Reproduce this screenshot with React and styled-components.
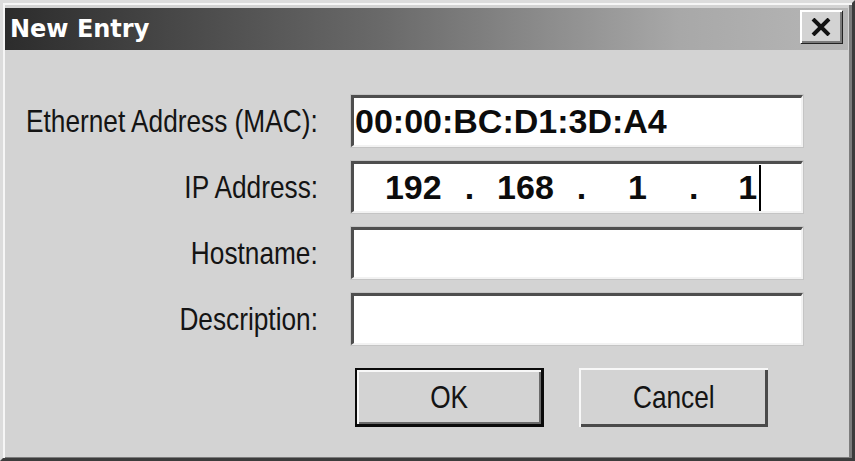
import React from "react";
import styled, { createGlobalStyle } from "styled-components";

const Global = createGlobalStyle`
  html, body { margin: 0; padding: 0; background: #d3d3d3; }
  body { width: 855px; height: 461px; overflow: hidden; }
`;

const Window = styled.div`
  box-sizing: border-box;
  width: 855px;
  height: 461px;
  display: flex;
  flex-direction: column;
  background: #d3d3d3;
  border-top: 3px solid #dcdcdc;
  border-left: 3px solid #dcdcdc;
  border-right: 3px solid #3c3c3c;
  border-bottom: 3px solid #3c3c3c;
  box-shadow: inset 2px 2px 0 #f6f6f6, inset -3px -1px 0 #7c7c7c;
  padding: 5px 4px 1px 2px;
`;

const TitleBar = styled.div`
  height: 42px;
  flex: none;
  display: flex;
  align-items: flex-start;
  justify-content: space-between;
  padding: 2px 6px 0 5px;
  box-sizing: border-box;
  background: linear-gradient(to right, #2c2c2c 0%, #6a6a6a 45%, #a8a8a8 80%, #b6b6b6 100%);
`;

const Title = styled.span`
  font-family: "DejaVu Sans", "Liberation Sans", sans-serif;
  font-weight: bold;
  font-size: 24px;
  line-height: 38px;
  color: #ffffff;
`;

const CloseButton = styled.button`
  box-sizing: border-box;
  width: 42px;
  height: 33px;
  padding: 0;
  display: flex;
  align-items: center;
  justify-content: center;
  background: #d3d3d3;
  border: none;
  box-shadow: inset 2px 2px 0 #ffffff, inset -2px -2px 0 #7a7a7a, 1px 1px 0 #222;
`;

const Body = styled.div`
  flex: 1;
  display: grid;
  grid-template-columns: minmax(0, 1fr) 452px;
  grid-auto-rows: 52px;
  column-gap: 33px;
  row-gap: 14px;
  padding: 45px 45px 0 10px;
  align-content: start;
`;

const Label = styled.label`
  align-self: center;
  display: flex;
  justify-content: flex-end;
  font-family: "Liberation Sans", Arial, sans-serif;
  font-size: 32px;
  color: #141414;
  white-space: nowrap;
`;

/* Windows dialog text of the reference is a tall, narrow face */
const Narrow = styled.span`
  display: inline-block;
  transform: scaleX(0.82);
  transform-origin: ${(p) => p.$origin || "right"} center;
`;

const Field = styled.div`
  box-sizing: border-box;
  height: 52px;
  background: #ffffff;
  border-top: 3px solid #4e4e4e;
  border-left: 3px solid #4e4e4e;
  border-bottom: 2px solid #f2f2f2;
  border-right: 2px solid #f2f2f2;
  box-shadow: 0 0 0 1px #c4c4c4;
  display: flex;
  align-items: center;
  padding: 0 0 0 ${(p) => p.$pad || 1}px;
  font-family: "Liberation Sans", Arial, sans-serif;
  font-weight: bold;
  font-size: 34px;
  color: #0c0c0c;
  white-space: nowrap;
`;

const Octet = styled.span`
  flex: 1;
  display: flex;
  justify-content: center;
  align-items: center;
`;

const Dot = styled.span`
  flex: none;
`;

const Caret = styled.span`
  display: inline-block;
  width: 2px;
  height: 46px;
  margin-left: 2px;
  background: #000;
`;

const ButtonRow = styled.div`
  grid-column: 2;
  display: flex;
  gap: 35px;
  padding-left: 4px;
  margin-top: 9px;
  height: 59px;
`;

const Button = styled.button`
  box-sizing: border-box;
  width: 189px;
  height: 59px;
  display: flex;
  align-items: center;
  justify-content: center;
  background: #d3d3d3;
  font-family: "Liberation Sans", Arial, sans-serif;
  font-size: 32px;
  color: #141414;
  padding: 0;
  border: ${(p) => (p.$default ? "2px solid #0a0a0a" : "none")};
  border-bottom-width: ${(p) => (p.$default ? "3px" : "0")};
  border-right-width: ${(p) => (p.$default ? "3px" : "0")};
  box-shadow: ${(p) =>
    p.$default
      ? "inset 2px 2px 0 #f8f8f8, inset -2px -2px 0 #6a6a6a"
      : "inset 2px 2px 0 #f8f8f8, inset -3px -3px 0 #4a4a4a"};
`;

function CloseIcon() {
  return (
    <svg width="20" height="18" viewBox="0 0 20 18">
      <path d="M2 1 L18 17 M18 1 L2 17" stroke="#111" strokeWidth="4" fill="none" />
    </svg>
  );
}

export default function App() {
  return (
    <>
      <Global />
      <Window>
        <TitleBar>
          <Title>New Entry</Title>
          <CloseButton aria-label="Close">
            <CloseIcon />
          </CloseButton>
        </TitleBar>
        <Body>
          <Label><Narrow>Ethernet Address (MAC):</Narrow></Label>
          <Field>00:00:BC:D1:3D:A4</Field>

          <Label><Narrow>IP Address:</Narrow></Label>
          <Field $pad={8}>
            <Octet>192</Octet>
            <Dot>.</Dot>
            <Octet>168</Octet>
            <Dot>.</Dot>
            <Octet>1</Octet>
            <Dot>.</Dot>
            <Octet>
              1<Caret />
            </Octet>
          </Field>

          <Label><Narrow>Hostname:</Narrow></Label>
          <Field />

          <Label><Narrow>Description:</Narrow></Label>
          <Field />

          <ButtonRow>
            <Button $default><Narrow $origin="center">OK</Narrow></Button>
            <Button><Narrow $origin="center">Cancel</Narrow></Button>
          </ButtonRow>
        </Body>
      </Window>
    </>
  );
}
